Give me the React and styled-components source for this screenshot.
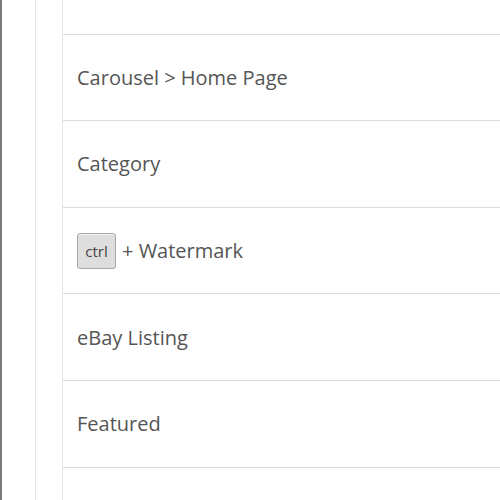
import React from "react"
import styled, { createGlobalStyle } from "styled-components"

const Global = createGlobalStyle`
  html, body {
    margin: 0;
    padding: 0;
    background: #fff;
  }
  body {
    font-family: "Open Sans", "Liberation Sans", sans-serif;
  }
`

const Page = styled.div`
  display: flex;
  flex-direction: row;
  width: 500px;
  height: 500px;
  overflow: hidden;
  border-left: 2px solid #7a7a7a;
  box-sizing: border-box;
`

const Gutter = styled.div`
  width: ${props => props.w}px;
  flex-shrink: 0;
  border-right: 1px solid #e3e3e3;
`

const List = styled.div`
  flex: 1;
  display: flex;
  flex-direction: column;
`

const Row = styled.div`
  display: flex;
  align-items: center;
  height: ${props => (props.h ? props.h : 85.6)}px;
  flex-shrink: 0;
  padding-left: 14px;
  border-bottom: 1px solid #dcdcdc;
  font-size: 20px;
  color: #555;
  gap: 6px;
`

const Key = styled.span`
  display: inline-flex;
  align-items: center;
  justify-content: center;
  width: 39px;
  height: 36px;
  box-sizing: border-box;
  background: #dedede;
  border: 1px solid #a9a9a9;
  border-radius: 3px;
  font-size: 15px;
  color: #444;
  box-shadow: inset 0 1px 0 #f2f2f2;
`

const items = [
  "Carousel > Home Page",
  "Category",
  null,
  "eBay Listing",
  "Featured",
  "",
]

export default function App() {
  return (
    <>
      <Global />
      <Page>
        <Gutter w={33} />
        <Gutter w={26} />
        <List>
          <Row h={33.6} />
          {items.map((label, i) =>
            label === null ? (
              <Row key={i}>
                <Key>ctrl</Key>+ Watermark
              </Row>
            ) : (
              <Row key={i}>{label}</Row>
            )
          )}
        </List>
      </Page>
    </>
  )
}
